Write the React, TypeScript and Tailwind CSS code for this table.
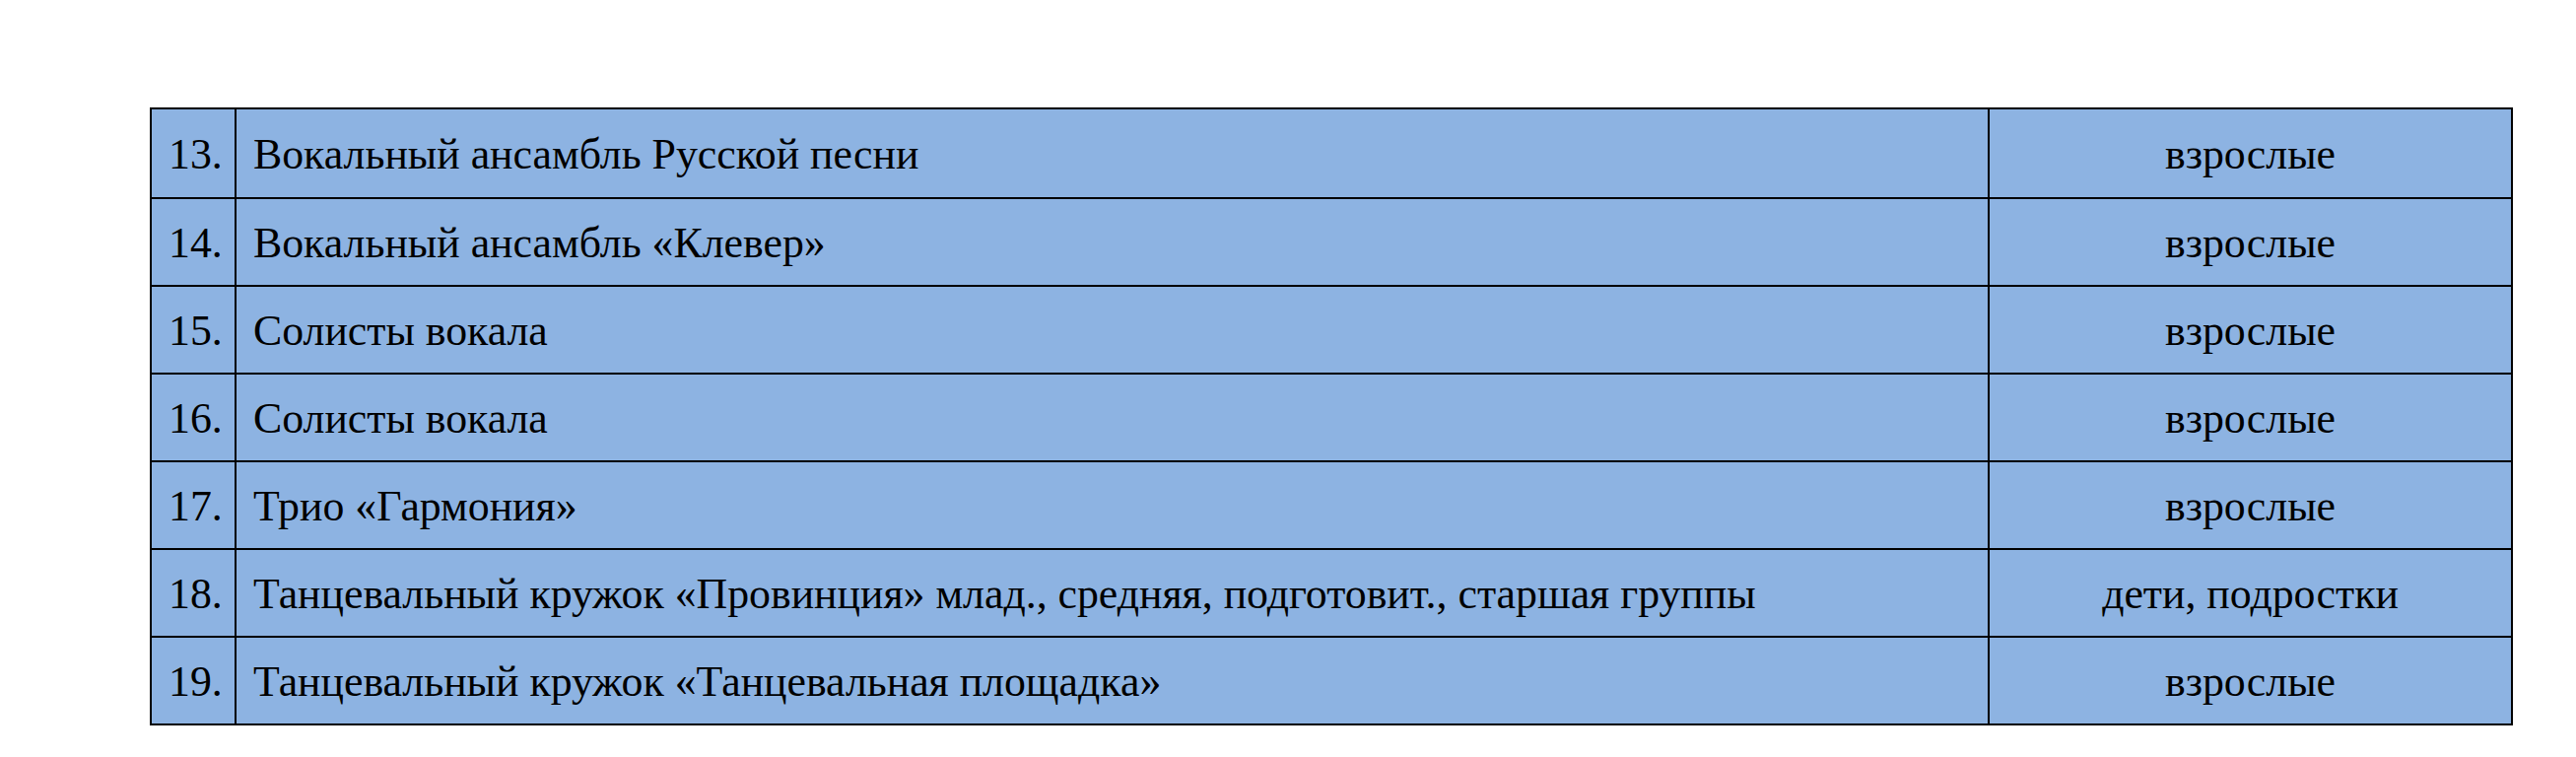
const rows: [string, string, string][] = [
  ['13.', 'Вокальный ансамбль Русской песни', 'взрослые'],
  ['14.', 'Вокальный ансамбль «Клевер»', 'взрослые'],
  ['15.', 'Солисты вокала', 'взрослые'],
  ['16.', 'Солисты вокала', 'взрослые'],
  ['17.', 'Трио «Гармония»', 'взрослые'],
  ['18.', 'Танцевальный кружок «Провинция» млад., средняя, подготовит., старшая группы', 'дети, подростки'],
  ['19.', 'Танцевальный кружок «Танцевальная площадка»', 'взрослые'],
];

export default function App() {
  return (
    <div className="w-[2614px] h-[768px] bg-white pt-[109px] pl-[152px] font-['Liberation_Serif',serif] text-black">
      <div className="w-[2398px] border-2 border-black bg-[#8db3e2]">
        {rows.map(([n, name, who], i) => (
          <div
            key={n}
            className={`grid grid-cols-[86px_1779px_1fr] h-[89px] ${i > 0 ? 'border-t-2 border-black' : ''}`}
          >
            <div className="flex items-center pl-[17px] pt-[2px] text-[43.8px] border-r-2 border-black">{n}</div>
            <div className="flex items-center pl-[17px] pt-[2px] text-[43.8px] border-r-2 border-black">{name}</div>
            <div className="flex items-center justify-center pt-[2px] text-[43.8px]">{who}</div>
          </div>
        ))}
      </div>
    </div>
  );
}
